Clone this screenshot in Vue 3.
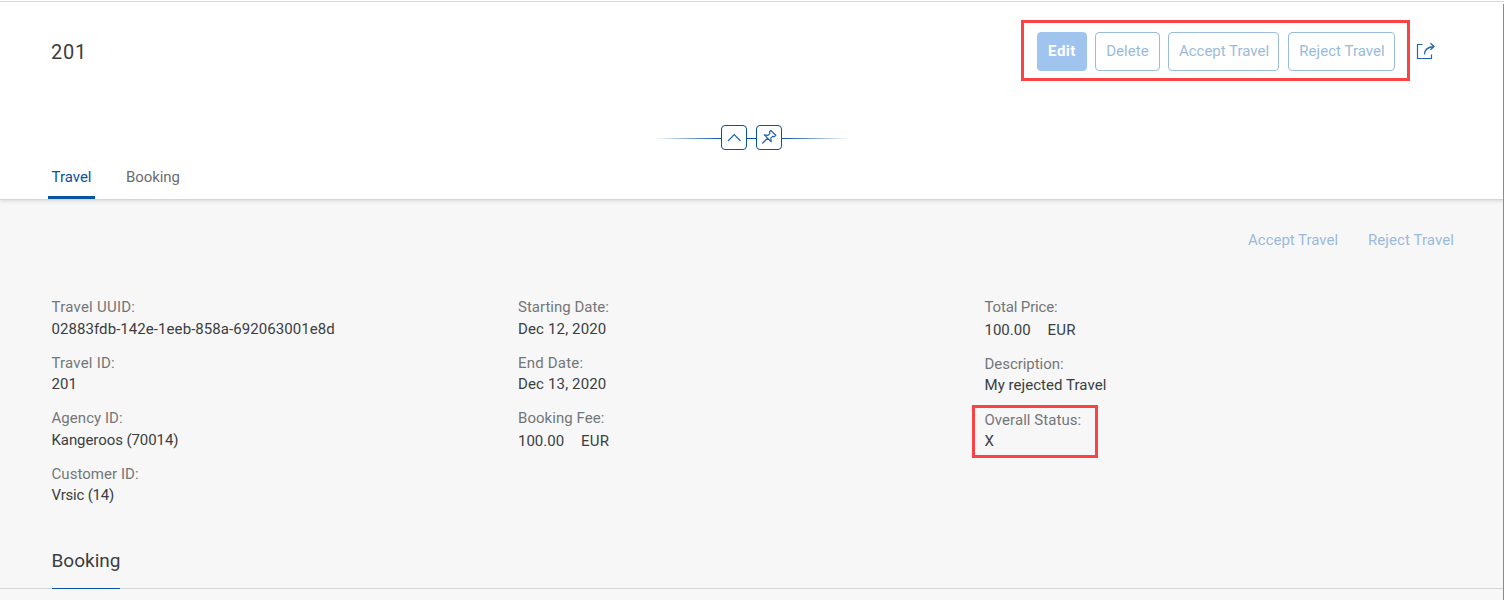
<script setup>
// lt / vt: letter tracking of the label and of the value, in px
const columns = [
  [
    { label: 'Travel UUID:', lt: 0.25, value: '02883fdb-142e-1eeb-858a-692063001e8d', vt: 0.07 },
    { label: 'Travel ID:', lt: 0.2, value: '201', vt: 0.1 },
    { label: 'Agency ID:', lt: 0.05, value: 'Kangeroos (70014)', vt: -0.08 },
    { label: 'Customer ID:', lt: 0.05, value: 'Vrsic (14)', vt: -0.2 },
  ],
  [
    { label: 'Starting Date:', lt: 0, value: 'Dec 12, 2020', vt: 0.15 },
    { label: 'End Date:', lt: 0.2, value: 'Dec 13, 2020', vt: 0.15 },
    { label: 'Booking Fee:', lt: 0.05, value: '100.00', vt: 0, unit: 'EUR' },
  ],
  [
    { label: 'Total Price:', lt: -0.15, value: '100.00', vt: 0, unit: 'EUR' },
    { label: 'Description:', lt: -0.05, value: 'My rejected Travel', vt: 0.05 },
    { label: 'Overall Status:', lt: 0.05, value: 'X', vt: 0, marked: true },
  ],
]
</script>

<template>
  <div class="page">
    <header class="header">
      <div class="title-row">
        <h1>201</h1>
        <div class="actions">
          <button class="btn primary">Edit</button>
          <button class="btn delete">Delete</button>
          <button class="btn accept">Accept Travel</button>
          <button class="btn reject">Reject Travel</button>
        </div>
        <svg class="share" width="20" height="20" viewBox="0 0 20 20" fill="none" stroke="#2466aa">
          <path d="M6.500 3.500H1.500V17.500H15.500V13.500" stroke-width="1.200" />
          <path d="M8.500 13.500C8.500 9 11 6 18 5.500M14.500 2.200L18 5.500L14.500 8.800" stroke-width="1.300" />
        </svg>
      </div>
      <div class="snap">
        <span class="line left"></span>
        <span class="box">
          <svg width="24" height="23" viewBox="0 0 24 23" fill="none" stroke="#2466aa" stroke-width="1.200"><path d="M6 15L12.300 8.500L18.500 15" /></svg>
        </span>
        <span class="line mid"></span>
        <span class="box">
          <svg width="24" height="23" viewBox="0 0 24 23" fill="none" stroke="#2466aa" stroke-width="1.200" stroke-linejoin="round"><path d="M13.800 4.500L18.800 9.300L17.500 10.600L15.600 10.400L13.800 12.100L14.200 15.700L7.300 8.900L11 9.300L12.800 7.600L12.500 5.800ZM10.500 12.300L5.200 17.500" /></svg>
        </span>
        <span class="line right"></span>
      </div>
      <nav class="tabs">
        <a class="tab active">Travel</a>
        <a class="tab">Booking</a>
      </nav>
    </header>
    <main>
      <div class="toolbar">
        <span>Accept Travel</span>
        <span class="r">Reject Travel</span>
      </div>
      <div class="form">
        <div v-for="(col, i) in columns" :key="i" class="col">
          <div v-for="f in col" :key="f.label" class="field" :class="{ marked: f.marked, amount: f.unit }">
            <div class="label" :style="{ letterSpacing: f.lt + 'px' }">{{ f.label }}</div>
            <div class="value" :style="{ letterSpacing: f.vt + 'px' }">{{ f.value }}<span v-if="f.unit" class="unit">{{ f.unit }}</span></div>
          </div>
        </div>
      </div>
      <div class="section"><h2>Booking</h2></div>
    </main>
    <div class="edge"></div>
  </div>
</template>

<style>
body { margin: 0; overflow: hidden; }
</style>

<style scoped>
.page { position: relative; box-sizing: border-box; width: 1504px; height: 600px; background: #f7f7f7; font: 15px/20px Roboto, "Liberation Sans", sans-serif; color: #3a3e42; overflow: hidden; }
.header { position: relative; box-sizing: border-box; height: 200px; background: #fff; border-bottom: 1px solid #d5d5d5; box-shadow: 0 1px 4px rgba(0, 0, 0, .13); padding-top: 1px; }
.title-row { display: flex; border-top: 1px solid #d9d9d9; height: 123px; padding: 18px 68px 0 51px; box-sizing: border-box; align-items: flex-start; }
h1 { margin: 20px auto 0 0; font-size: 20px; line-height: 24px; font-weight: 400; letter-spacing: .8px; }
.actions { display: flex; gap: 8px; box-sizing: border-box; width: 389px; height: 61px; border: 3px solid #fb4343; padding: 9px 12px 0 13px; }
.btn { box-sizing: border-box; height: 39px; border: 1px solid #9bbbdc; border-radius: 4px; background: #fff; color: #9bbbdc; font: inherit; padding: 0 0 2px; white-space: nowrap; }
.primary { width: 50px; background: #9fc5ef; border-color: #9fc5ef; color: #fff; font-weight: 700; letter-spacing: .5px; }
.delete { width: 65px; letter-spacing: .05px; }
.accept { width: 111px; letter-spacing: 0; padding-left: 1px; }
.reject { width: 107px; margin-left: 1px; letter-spacing: .05px; padding-left: 1px; }
.share { margin: 21px 0 0 6px; }
.snap { display: flex; align-items: center; width: 194px; margin: 1px 0 0 655px; height: 25px; }
.box { box-sizing: border-box; width: 26px; height: 25px; border: 1px solid #0854a0; border-radius: 4px; background: #fff; }
.box svg { display: block; }
.line { height: 1px; background: #0854a0; margin-top: 2px; }
.left { width: 66px; background: linear-gradient(90deg, transparent, #0854a0); }
.mid { width: 9px; }
.right { width: 67px; background: linear-gradient(270deg, transparent, #0854a0); }
.tabs { display: flex; padding-left: 48px; height: 49px; gap: 27px; }
.tab { box-sizing: border-box; height: 49px; padding: 17px 4px 0; color: #6a6d70; letter-spacing: -.1px; }
.active { width: 47px; padding-left: 3.500px; color: #0854a0; border-bottom: 3px solid #0854a0; border-radius: 2px 2px 0 0; letter-spacing: 0; }
.toolbar { display: flex; justify-content: flex-end; gap: 30px; padding: 30px 50px 0 0; color: #9bbbdc; letter-spacing: -.02px; }
.toolbar .r { letter-spacing: .08px; }
.form { display: grid; grid-template-columns: 466.500px 466.500px 1fr; padding: 47px 0 0 51.500px; height: 300px; box-sizing: border-box; }
.field { height: 55.600px; }
.label { color: #737679; height: 21.500px; }
.value { height: 20px; }
.amount { height: 56.600px; }
.amount .value { padding-top: 1px; }
.unit { margin-left: 17px; letter-spacing: .15px; }
.marked { box-sizing: border-box; width: 126px; height: 53px; margin: -4px 0 0 -13px; border: 3px solid #fb4343; padding: 2px 0 0 10px; }
.marked .label { height: 21px; }
.section { box-sizing: border-box; height: 39px; padding-left: 51.500px; border-bottom: 1px solid #d5d5d5; }
h2 { box-sizing: border-box; width: 68px; height: 39px; margin: 0; font-size: 19px; line-height: 22px; font-weight: 400; border-bottom: 1px solid #0854a0; white-space: nowrap; }
.edge { position: absolute; right: 0; top: 4px; width: 1px; height: 596px; background: #8b8b8b; }
</style>
